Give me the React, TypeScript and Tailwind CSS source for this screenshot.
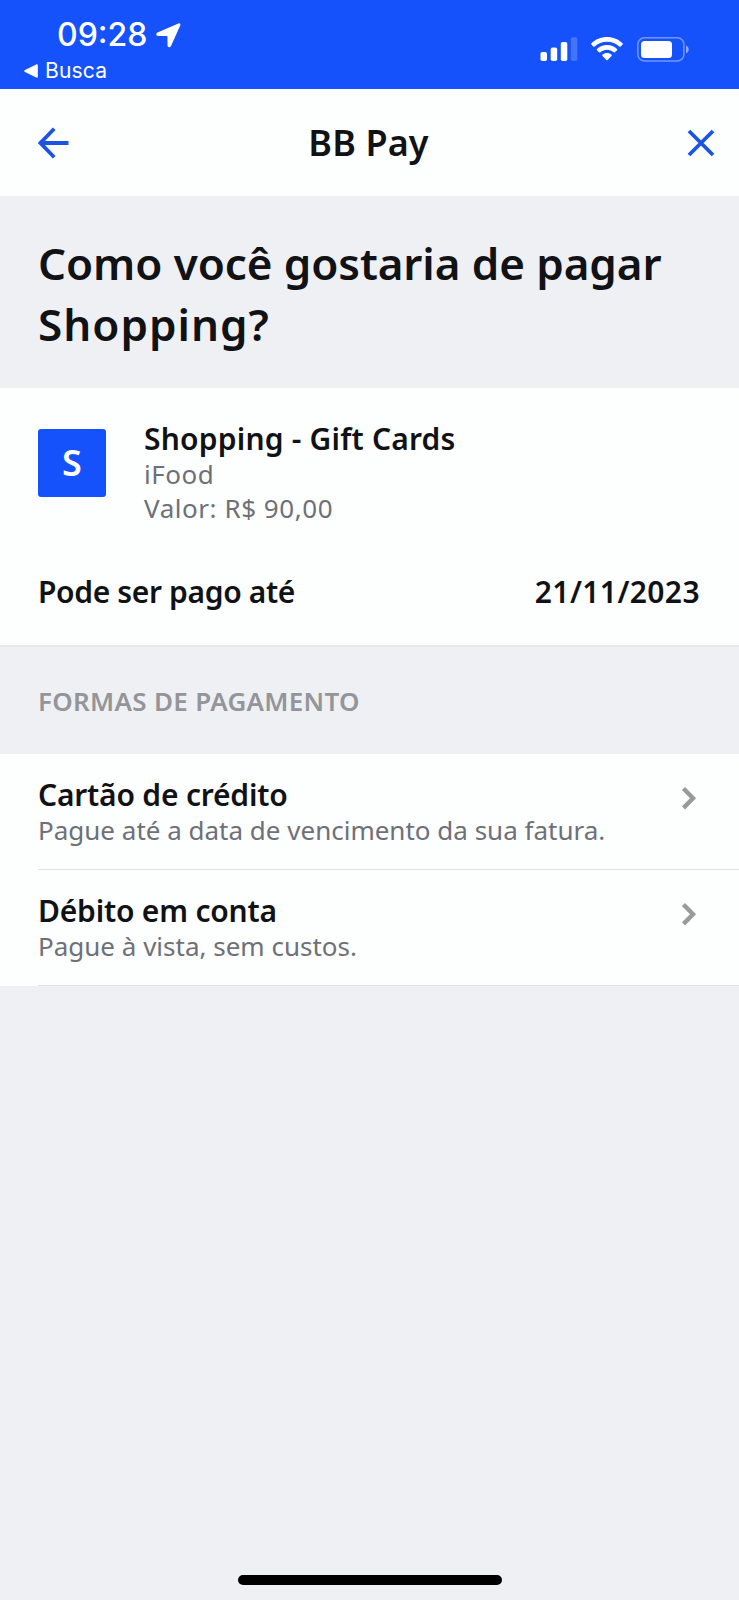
type PaymentMethod = {
  id: string;
  title: string;
  description: string;
};

const METHODS: PaymentMethod[] = [
  {
    id: "credit",
    title: "Cartão de crédito",
    description: "Pague até a data de vencimento da sua fatura.",
  },
  {
    id: "debit",
    title: "Débito em conta",
    description: "Pague à vista, sem custos.",
  },
];

function StatusBar() {
  return (
    <div className="h-[89px] bg-[#1652fb] text-white flex justify-between font-['Inter',sans-serif]">
      <div className="pt-[15px] pl-6">
        <div className="flex items-center pl-[33px] h-[40px]">
          <span className="text-[32px] leading-[40px] font-medium">09:28</span>
          <svg className="w-[25px] h-[25px] ml-[9px]" viewBox="0 0 26 26" fill="currentColor">
            <path d="M23.3.5 1.6 9.8C-.4 10.7 0 13.3 2 13.4l9.300.1c.4 0 .6.2.6.6l.1 9.400c.1 2 2.700 2.400 3.600.4L25.200 2.600C25.800 1.100 24.800-.1 23.300.5z" />
          </svg>
        </div>
        <div className="flex items-center h-[32px]">
          <svg className="w-[14px] h-[14px]" viewBox="0 0 14 14" fill="currentColor">
            <path d="M12.200.4 1 6C-.1 6.600-.1 7.500 1 8.100l11.200 5.500c.9.4 1.600 0 1.600-.9V1.300C13.800.4 13.100 0 12.200.4z" />
          </svg>
          <span className="ml-[7px] text-[21px] leading-[32px] tracking-[0.2px]">Busca</span>
        </div>
      </div>

      <div className="flex items-start pt-[37px] pr-[49px]">
        {/* Signal */}
        <svg className="w-[38px] h-[25px]" viewBox="0 0 38 25" fill="currentColor">
          <rect x="0.500" y="15" width="6.500" height="9" rx="1.800" />
          <rect x="10.700" y="10.500" width="6.500" height="13.500" rx="1.800" />
          <rect x="20.800" y="5" width="6.500" height="19" rx="1.800" />
          <rect x="30.800" y="0.300" width="6.500" height="23.700" rx="1.800" opacity="0.2" />
        </svg>
        {/* Wifi */}
        <svg className="w-[32px] h-[25px] ml-[13px]" viewBox="0 0 32 25" fill="currentColor">
          <path d="M16 0C9.900 0 4.300 2.400.4 6.300c-.4.4-.4.900 0 1.200l1.900 2c.4.400.900.400 1.300 0C6.900 6.400 11.200 4.700 16 4.700s9.100 1.700 12.400 4.800c.4.400.900.400 1.300 0l1.900-2c.4-.300.400-.800 0-1.200C27.700 2.400 22.100 0 16 0z" />
          <path d="M16 8c-3.900 0-7.400 1.500-10 3.900-.4.400-.4.900 0 1.300l2 2c.400.400.900.400 1.300 0 1.800-1.600 4.100-2.500 6.700-2.500s4.900.900 6.700 2.500c.4.400.900.400 1.300 0l2-2c.4-.4.4-.9 0-1.300C23.400 9.500 19.900 8 16 8z" />
          <path d="M16 16c-1.800 0-3.300.600-4.500 1.600-.4.400-.4.900 0 1.300l3.800 4c.4.400 1 .400 1.400 0l3.800-4c.4-.4.4-.9 0-1.300C19.300 16.600 17.800 16 16 16z" />
        </svg>
        {/* Battery */}
        <svg className="w-[53px] h-[25px] ml-[14px]" viewBox="0 0 53 25" fill="currentColor">
          <rect x="0.900" y="0.800" width="46" height="23.200" rx="6.500" fill="none" stroke="currentColor" strokeWidth="1.500" opacity="0.4" />
          <rect x="4" y="4" width="31" height="17" rx="3.500" />
          <path d="M49 8.500c1.700.7 2.700 2.100 2.700 3.900s-1 3.200-2.700 3.900z" opacity="0.5" />
        </svg>
      </div>
    </div>
  );
}

function Header() {
  return (
    <header className="h-[107px] bg-[#fdfefe] grid grid-cols-[1fr_auto_1fr] items-center pl-[38px] pr-[24px] text-[#1b54e0]">
      <button aria-label="Voltar">
        <svg className="w-[32px] h-[32px]" viewBox="0 0 32 32" fill="none" stroke="currentColor" strokeWidth="3.800">
          <path d="M30.500 16H2.500M16.200 1.800 2.500 16l13.700 14.200" />
        </svg>
      </button>
      <h1 className="pt-px pr-[16px] text-[36px] leading-[48px] font-semibold tracking-[0.1px] text-[#111215]">BB Pay</h1>
      <button aria-label="Fechar" className="justify-self-end">
        <svg className="w-[28px] h-[28px]" viewBox="0 0 28 28" fill="none" stroke="currentColor" strokeWidth="3.800">
          <path d="M2 2l24 24M26 2 2 26" />
        </svg>
      </button>
    </header>
  );
}

function MethodRow({ method }: { method: PaymentMethod }) {
  return (
    <li className="pl-[38px]">
      <div className="h-[116px] border-b border-[#e1e2e5] pt-[22px] pr-[42px] flex justify-between items-start">
        <div className="whitespace-nowrap">
          <p className="text-[30px] leading-[38px] font-semibold tracking-[-0.2px] text-[#111215]">{method.title}</p>
          <p className="-mt-px text-[26px] leading-[34px] text-[#6e7078]">{method.description}</p>
        </div>
        <svg className="w-[16px] h-[24px] mt-[10px] text-[#999a9b]" viewBox="0 0 16 24" fill="none" stroke="currentColor" strokeWidth="4.400">
          <path d="M2.500 2.500 12 12.200l-9.500 9.700" />
        </svg>
      </div>
    </li>
  );
}

export default function App() {
  return (
    <div className="h-[1600px] w-[739px] overflow-hidden bg-[#eff0f4] flex flex-col font-['Noto_Sans',sans-serif]">
      <StatusBar />
      <Header />

      <h2 className="h-[192px] pt-[37px] pl-[38px] whitespace-nowrap text-[44px] leading-[61px] font-semibold text-[#111215]">
        <span className="tracking-[-0.080px]">Como você gostaria de pagar</span>
        <br />
        <span className="tracking-[1px]">Shopping?</span>
      </h2>

      {/* Charge summary */}
      <section className="h-[259px] bg-[#fdfefe] border-b-2 border-[#e8e9ec] px-[38px] pt-[32px] whitespace-nowrap">
        <div className="flex items-start">
          <div className="w-[68px] h-[68px] mt-[9px] rounded-[3px] bg-[#1652fb] text-white text-[36px] font-semibold flex items-center justify-center">
            S
          </div>
          <div className="ml-[38px] text-[26px] leading-[34px] text-[#6e7078]">
            <p className="text-[30px] leading-[38px] font-semibold tracking-[0.2px] text-[#111215]">Shopping - Gift Cards</p>
            <p className="-mt-px tracking-[0.500px]">iFood</p>
            <p className="tracking-[0.550px]">Valor: R$ 90,00</p>
          </div>
        </div>
        <div className="mt-[48px] flex justify-between text-[30px] leading-[38px] font-semibold text-[#111215]">
          <span className="tracking-[-0.350px]">Pode ser pago até</span>
          <span className="pr-px tracking-[0.4px]">21/11/2023</span>
        </div>
      </section>

      <h3 className="h-[107px] pt-[37px] pl-[38px] text-[26px] leading-[34px] font-semibold tracking-[0.3px] text-[#949599]">
        FORMAS DE PAGAMENTO
      </h3>

      <ul className="bg-[#fdfefe]">
        {METHODS.map((m) => <MethodRow key={m.id} method={m} />)}
      </ul>

      {/* Home indicator */}
      <div className="mt-auto mb-[15px] self-center w-[264px] h-[10px] rounded-full bg-black" />
    </div>
  );
}
